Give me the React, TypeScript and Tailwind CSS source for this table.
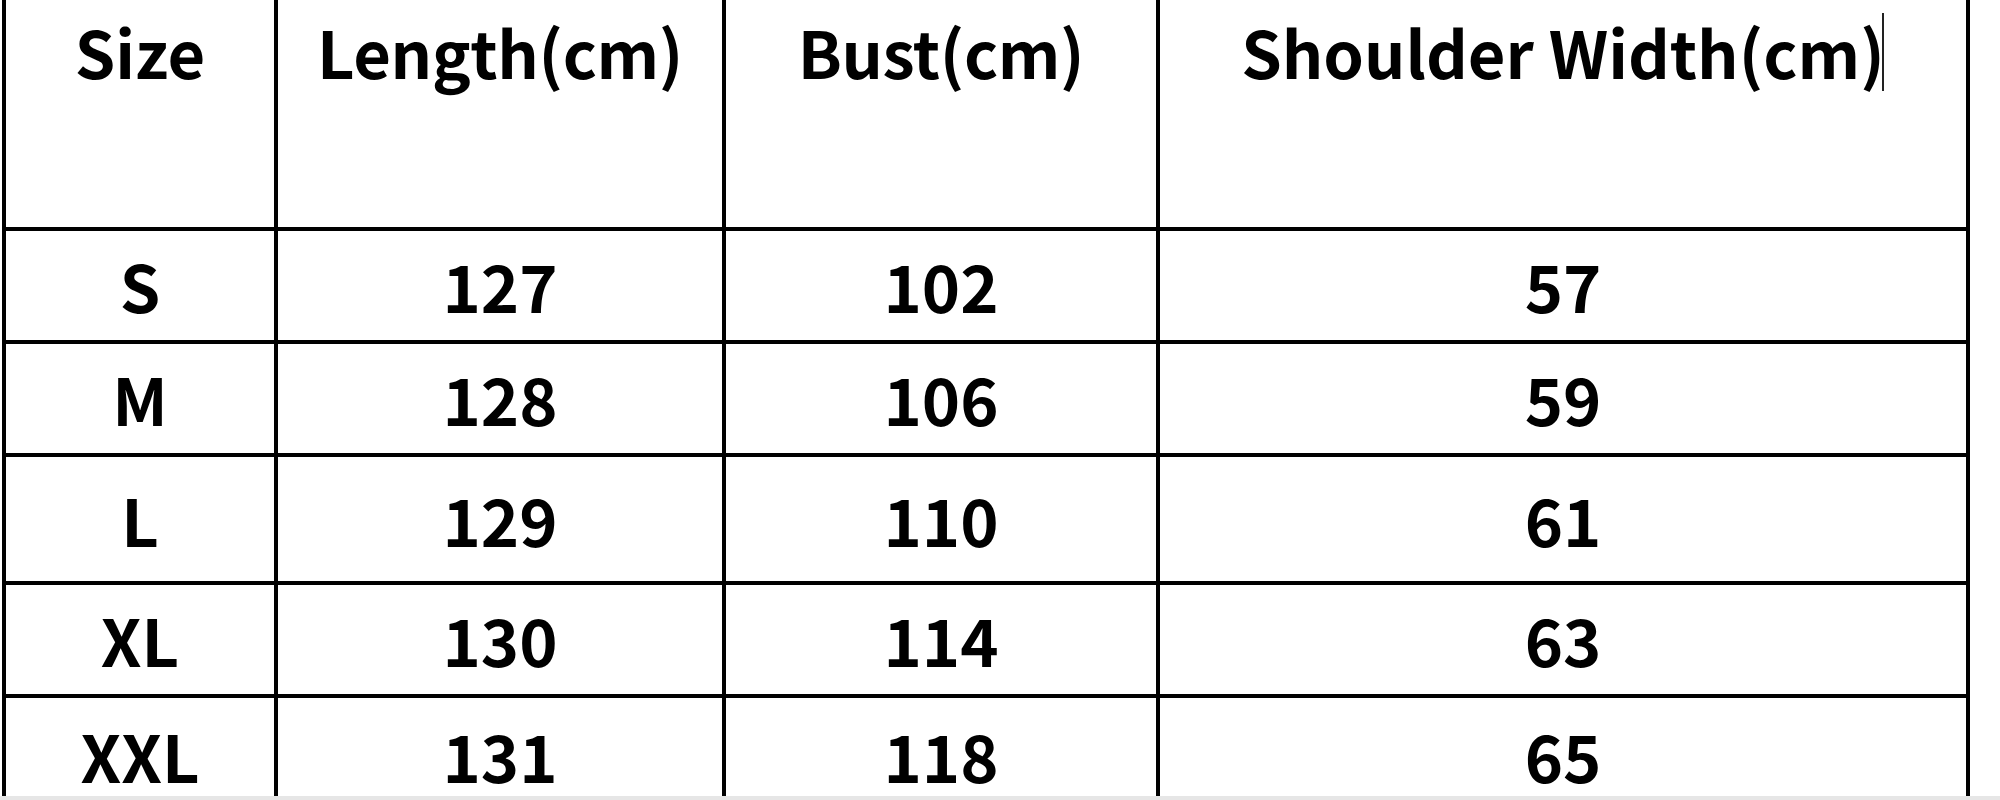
import React from "react";

const rows: { size: string; length: string; bust: string; shoulder: string; h: string; last?: boolean }[] = [
  { size: "S", length: "127", bust: "102", shoulder: "57", h: "h-[113px]" },
  { size: "M", length: "128", bust: "106", shoulder: "59", h: "h-[113px]" },
  { size: "L", length: "129", bust: "110", shoulder: "61", h: "h-[128px]" },
  { size: "XL", length: "130", bust: "114", shoulder: "63", h: "h-[113px]" },
  { size: "XXL", length: "131", bust: "118", shoulder: "65", h: "h-[98px]", last: true },
];

const font = "font-['Noto_Sans_CJK_SC','Noto_Sans',sans-serif] font-bold text-black text-[65px] leading-none";
const cols = "grid grid-cols-[272px_448px_434px_810px]";

export default function App() {
  return (
    <div className="w-[2000px] h-[800px] bg-white flex flex-col overflow-hidden">
      <div className="h-[796px] overflow-hidden">
        <div className={`ml-[2px] w-[1968px] border-l-4 border-black ${font}`}>
          <div className={`${cols} h-[231px]`}>
            <div className="border-r-4 border-b-4 border-black flex justify-center pt-[19px]">Size</div>
            <div className="border-r-4 border-b-4 border-black flex justify-center pt-[19px] tracking-[-0.4px]">Length(cm)</div>
            <div className="border-r-4 border-b-4 border-black flex justify-center pt-[19px] tracking-[-0.4px]">Bust(cm)</div>
            <div className="border-r-4 border-b-4 border-black flex justify-center pt-[19px]">
              <span className="relative">
                Shoulder Width(cm)
                <span className="absolute left-[calc(100%-3px)] top-[-6px] w-[2px] h-[78px] bg-[#222]" />
              </span>
            </div>
          </div>
          {rows.map((r) =>
            r.last ? (
              <div key={r.size} className={`${cols} ${r.h}`}>
                <div className="border-r-4 border-black flex justify-center pt-[25px]">{r.size}</div>
                <div className="border-r-4 border-black flex justify-center pt-[25px]">{r.length}</div>
                <div className="border-r-4 border-black flex justify-center pt-[25px]">{r.bust}</div>
                <div className="border-r-4 border-black flex justify-center pt-[25px]">{r.shoulder}</div>
              </div>
            ) : (
              <div key={r.size} className={`${cols} ${r.h}`}>
                <div className="border-r-4 border-b-4 border-black flex items-center justify-center">{r.size}</div>
                <div className="border-r-4 border-b-4 border-black flex items-center justify-center">{r.length}</div>
                <div className="border-r-4 border-b-4 border-black flex items-center justify-center">{r.bust}</div>
                <div className="border-r-4 border-b-4 border-black flex items-center justify-center">{r.shoulder}</div>
              </div>
            )
          )}
        </div>
      </div>
      <div className="h-[4px] bg-[#e6e6e6]" />
    </div>
  );
}
